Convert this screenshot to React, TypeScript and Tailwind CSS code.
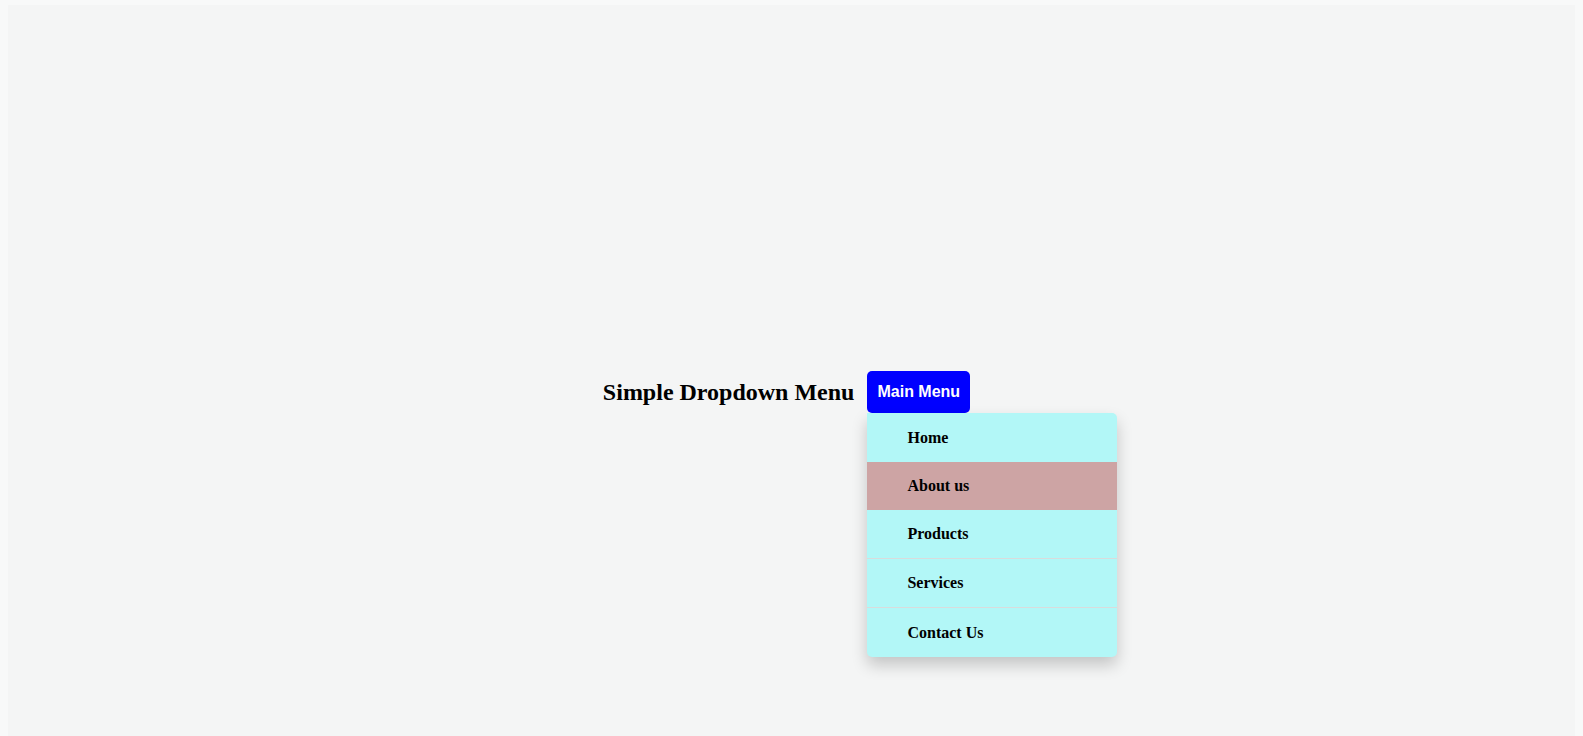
const items = ['Home', 'About us', 'Products', 'Services', 'Contact Us'];

export default function App() {
  return (
    <div className="h-screen overflow-hidden bg-[#f8f9f9] px-2 pt-[5px]">
      <div className="h-[800px] bg-[#f4f5f5] pt-[366px]">
        <div className="flex items-center justify-center gap-[13px] pr-[10px]">
          <h2 className="font-['Liberation_Serif',serif] text-2xl font-bold text-black">
            Simple Dropdown Menu
          </h2>
          <div className="relative">
            <button className="h-[42px] rounded-[5px] bg-[#0000ff] px-[10px] font-['Liberation_Sans',sans-serif] text-base font-bold text-white">
              Main Menu
            </button>
            <ul className="absolute left-0 top-full w-[250px] overflow-hidden rounded-r-[5px] rounded-bl-[5px] bg-[#b2f7f7] font-['Liberation_Serif',serif] text-base font-bold text-black shadow-[0_8px_16px_rgba(0,0,0,0.2)]">
              {items.map((item, i) => (
                <li
                  key={item}
                  className={
                    i === 1
                      ? 'flex h-[48px] items-center bg-[#cda4a4] pl-10'
                      : i === 0 || i === 4
                        ? 'flex h-[49px] items-center pl-10'
                        : 'flex h-[49px] items-center border-b border-[#d9dcdc] pl-10'
                  }
                >
                  {item}
                </li>
              ))}
            </ul>
          </div>
        </div>
      </div>
    </div>
  );
}
